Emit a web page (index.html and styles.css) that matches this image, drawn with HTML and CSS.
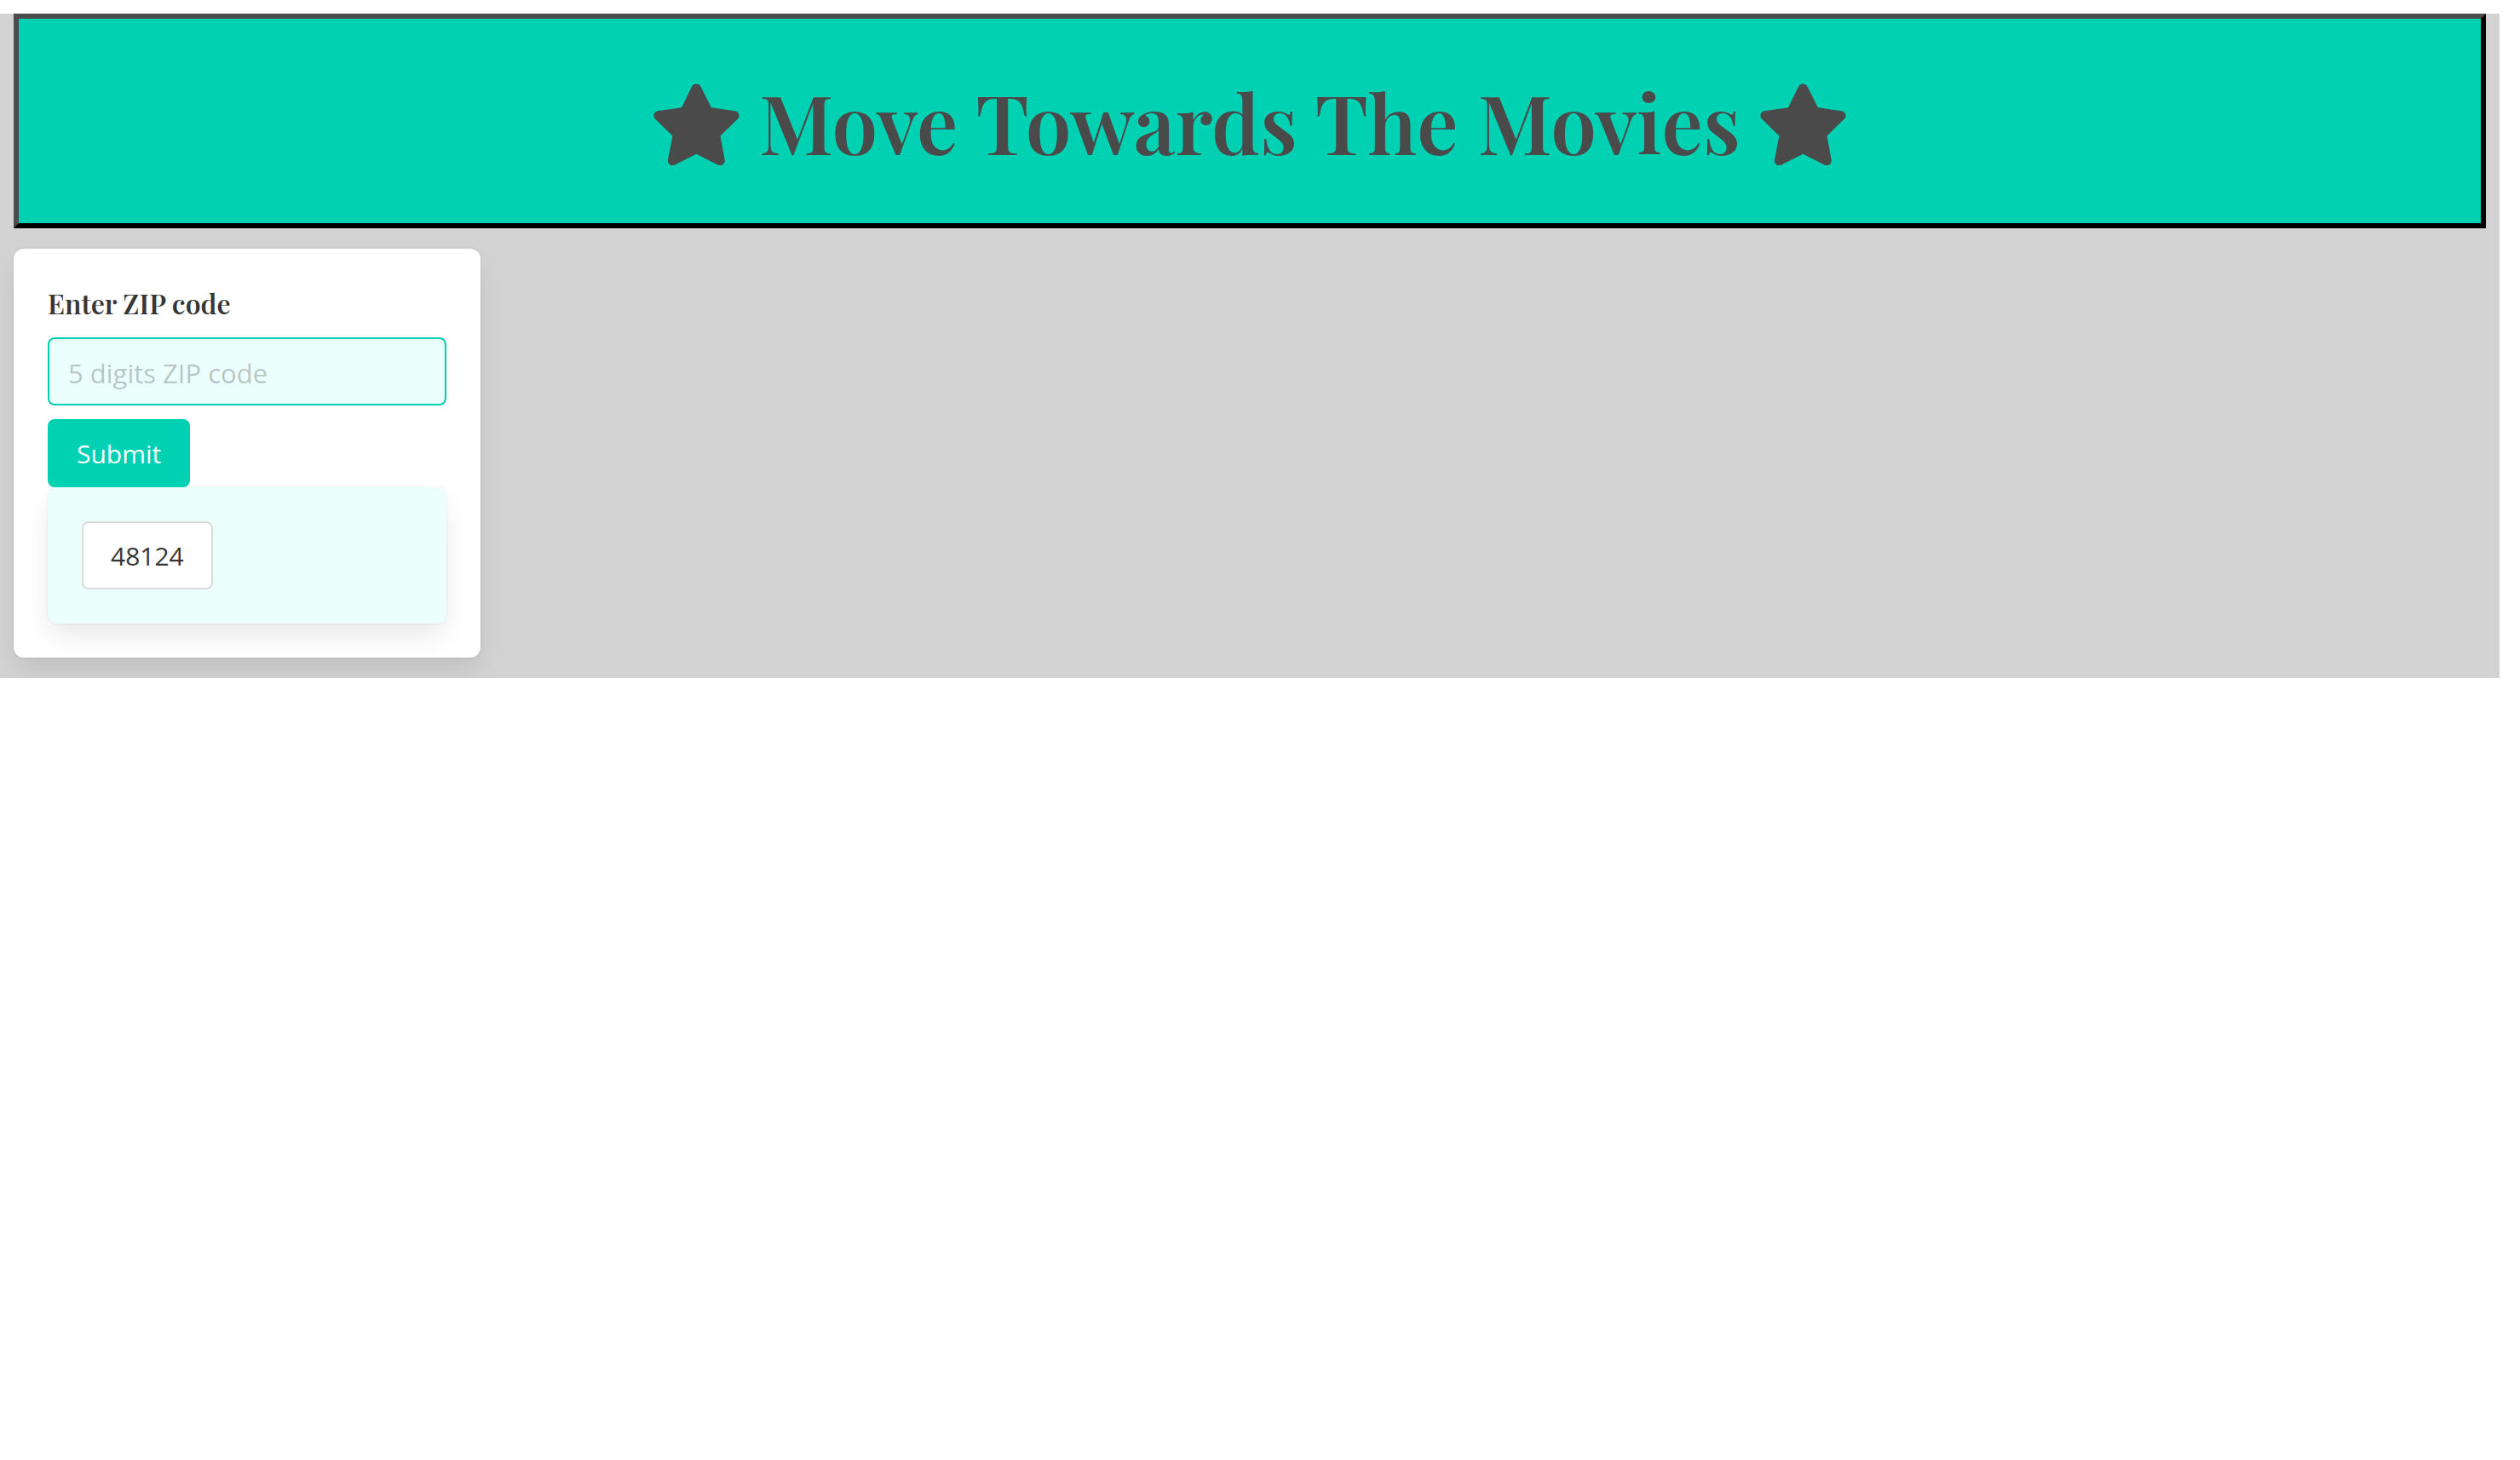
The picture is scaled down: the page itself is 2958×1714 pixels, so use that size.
FILE: index.html
```html
<!DOCTYPE html>
<html lang="en">
<head>
  <meta charset="utf-8">
  <meta name="viewport" content="width=device-width, initial-scale=1">
  <title>Move Towards The Movies</title>
  <link rel="stylesheet" href="styles.css">
</head>
<body>
  <div class="page">
    <header class="banner">
      <svg class="star" viewBox="0 0 303 289" aria-hidden="true"><path d="M135 11A18 18 0 0 1 167 11L204 85L287 97A17 17 0 0 1 297 126L236 185L251 268A17 17 0 0 1 225 287L151 249L77 287A17 17 0 0 1 51 268L67 185L6 126A17 17 0 0 1 15 97L99 85Z"/></svg>
      <h1 class="title">Move Towards The Movies</h1>
      <svg class="star" viewBox="0 0 303 289" aria-hidden="true"><path d="M135 11A18 18 0 0 1 167 11L204 85L287 97A17 17 0 0 1 297 126L236 185L251 268A17 17 0 0 1 225 287L151 249L77 287A17 17 0 0 1 51 268L67 185L6 126A17 17 0 0 1 15 97L99 85Z"/></svg>
    </header>
    <main class="box search">
      <form class="form">
        <label class="label" for="zip">Enter ZIP code</label>
        <input class="input" id="zip" type="text" placeholder="5 digits ZIP code">
        <button class="button primary" type="button">Submit</button>
      </form>
      <div class="box history">
        <button class="button" type="button">48124</button>
      </div>
    </main>
  </div>
</body>
</html>
```
FILE: styles.css
```css
* {
  box-sizing: border-box;
}

body {
  margin: 0;
  background: #fff;
  color: #363636;
  font-family: "Open Sans", "Noto Sans", sans-serif;
  font-size: 32px;
  line-height: 48px;
}

.page {
  margin: 16px 24px 0 0;
  padding: 0 16px 24px;
  background: #d3d3d3;
}

.banner {
  display: flex;
  align-items: center;
  justify-content: center;
  gap: 23px;
  padding: 60px 24px;
  border: 6px solid #000;
  border-top-color: #4c4c4c;
  border-left-color: #4c4c4c;
  background: #00d1b2;
  color: #4a4a4a;
}

.title {
  margin: 0;
  font-family: "Playfair Display", "Liberation Serif", serif;
  font-size: 96px;
  font-weight: 600;
  line-height: 120px;
}

.star {
  flex: none;
  width: 101px;
  height: 96px;
  margin-top: 8px;
  fill: currentColor;
}

.box {
  padding: 40px;
  border-radius: 12px;
  background: #fff;
  box-shadow: 0 16px 32px -4px rgba(10, 10, 10, 0.1), 0 0 0 2px rgba(10, 10, 10, 0.02);
}

.search {
  max-width: 548px;
  margin-top: 24px;
}

.form {
  display: flex;
  flex-direction: column;
  align-items: flex-start;
  gap: 16px;
}

.label {
  font-family: "Playfair Display", "Liberation Serif", serif;
  font-weight: 600;
}

.input,
.button {
  height: 80px;
  border: 2px solid #dbdbdb;
  border-radius: 8px;
  color: #363636;
  font: inherit;
}

.input {
  width: 100%;
  padding: 4px 22px 0;
  border-color: #00d1b2;
  background: #ebfffc;
  box-shadow: inset 0 2px 4px rgba(10, 10, 10, 0.05);
  font-size: 31px;
}

.input::placeholder {
  color: rgba(54, 54, 54, 0.3);
  opacity: 1;
}

.button {
  padding: 2px 32px 0;
  background: #fff;
  font-size: 30px;
}

.button.primary {
  border-color: #00d1b2;
  background: #00d1b2;
  color: #fff;
}

.history {
  display: flex;
  background: #ebfffc;
}
```
